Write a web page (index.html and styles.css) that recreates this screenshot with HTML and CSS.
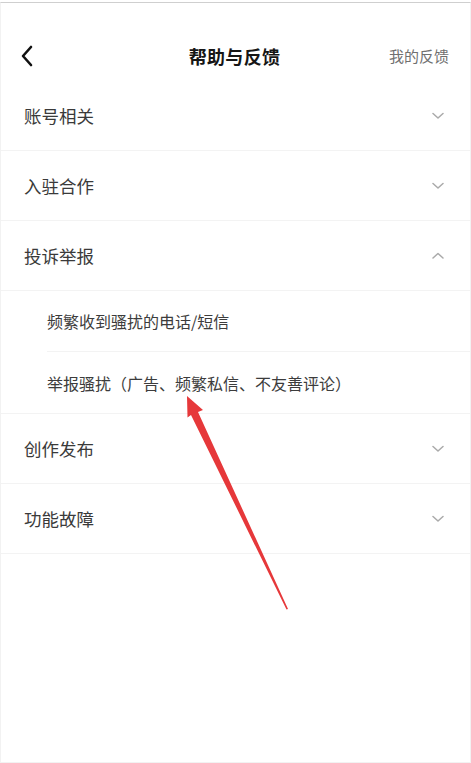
FILE: index.html
```html
<!DOCTYPE html>
<html lang="zh-CN">
<head>
<meta charset="utf-8">
<link rel="stylesheet" href="styles.css">
</head>
<body>
<div class="screen">
  <header class="topbar">
    <span class="back"><svg width="14" height="22" viewBox="0 0 14 22"><path d="M11 2 L3 11 L11 20" fill="none" stroke="#111" stroke-width="2.6" stroke-linecap="round" stroke-linejoin="round"/></svg></span>
    <h1 class="title">帮助与反馈</h1>
    <span class="mine">我的反馈</span>
  </header>
  <ul class="list">
    <li class="row"><span>账号相关</span><svg class="chev" width="12" height="8" viewBox="0 0 12 8"><path d="M1 1.5 L6 6 L11 1.5" fill="none" stroke="#aaa" stroke-width="1.5" stroke-linecap="round" stroke-linejoin="round"/></svg></li>
    <li class="row"><span>入驻合作</span><svg class="chev" width="12" height="8" viewBox="0 0 12 8"><path d="M1 1.5 L6 6 L11 1.5" fill="none" stroke="#aaa" stroke-width="1.5" stroke-linecap="round" stroke-linejoin="round"/></svg></li>
    <li class="row"><span>投诉举报</span><svg class="chev" width="12" height="8" viewBox="0 0 12 8"><path d="M1 6 L6 1.5 L11 6" fill="none" stroke="#aaa" stroke-width="1.5" stroke-linecap="round" stroke-linejoin="round"/></svg></li>
    <li class="sub">
      <div class="sub-item inset">频繁收到骚扰的电话/短信</div>
      <div class="sub-item">举报骚扰（广告、频繁私信、不友善评论）</div>
    </li>
    <li class="row"><span>创作发布</span><svg class="chev" width="12" height="8" viewBox="0 0 12 8"><path d="M1 1.5 L6 6 L11 1.5" fill="none" stroke="#aaa" stroke-width="1.5" stroke-linecap="round" stroke-linejoin="round"/></svg></li>
    <li class="row"><span>功能故障</span><svg class="chev" width="12" height="8" viewBox="0 0 12 8"><path d="M1 1.5 L6 6 L11 1.5" fill="none" stroke="#aaa" stroke-width="1.5" stroke-linecap="round" stroke-linejoin="round"/></svg></li>
  </ul>
  <svg class="arrow" width="471" height="763" viewBox="0 0 471 763">
    <path d="M187 396 L203 410 L198 412 L288 609 L286.5 609.5 L191 415 L187.5 417.5 Z" fill="#e6383a"/>
  </svg>
</div>
</body>
</html>
```
FILE: styles.css
```css
html, body {
  margin: 0;
  padding: 0;
  background: #ffffff;
}
body {
  width: 471px;
  height: 763px;
  overflow: hidden;
  font-family: "Noto Sans CJK SC", "Noto Sans", sans-serif;
}
.screen {
  position: relative;
  box-sizing: border-box;
  margin-top: 2px;
  height: 761px;
  border-top: 1px solid #cfcfcf;
  border-left: 1px solid #f2f2f2;
  border-right: 1px solid #f2f2f2;
  border-bottom: 1px solid #f2f2f2;
}
.topbar {
  display: flex;
  align-items: center;
  justify-content: space-between;
  height: 51px;
  margin-top: 27px;
  padding: 0 21px 0 19px;
}
.back {
  display: flex;
  width: 60px;
}
.title {
  margin: 0;
  font-size: 18px;
  font-weight: 700;
  color: #161616;
  letter-spacing: 0.3px;
}
.mine {
  width: 60px;
  font-size: 15px;
  color: #707070;
  text-align: right;
}
.list {
  list-style: none;
  margin: 0;
  padding: 0;
}
.row {
  display: flex;
  align-items: center;
  justify-content: space-between;
  box-sizing: border-box;
  height: 70px;
  padding: 0 26px 0 23px;
  border-bottom: 1px solid #f3f3f3;
  font-size: 17.5px;
  color: #3a3a3a;
}
.chev {
  display: block;
}
.sub {
  border-bottom: 1px solid #f3f3f3;
}
.sub-item {
  display: flex;
  align-items: center;
  box-sizing: border-box;
  height: 61px;
  margin-left: 46px;
  font-size: 16px;
  color: #3c3c3c;
}
.sub-item.inset {
  border-bottom: 1px solid #f3f3f3;
}
.arrow {
  position: absolute;
  left: -1px;
  top: -3px;
  pointer-events: none;
}
```
